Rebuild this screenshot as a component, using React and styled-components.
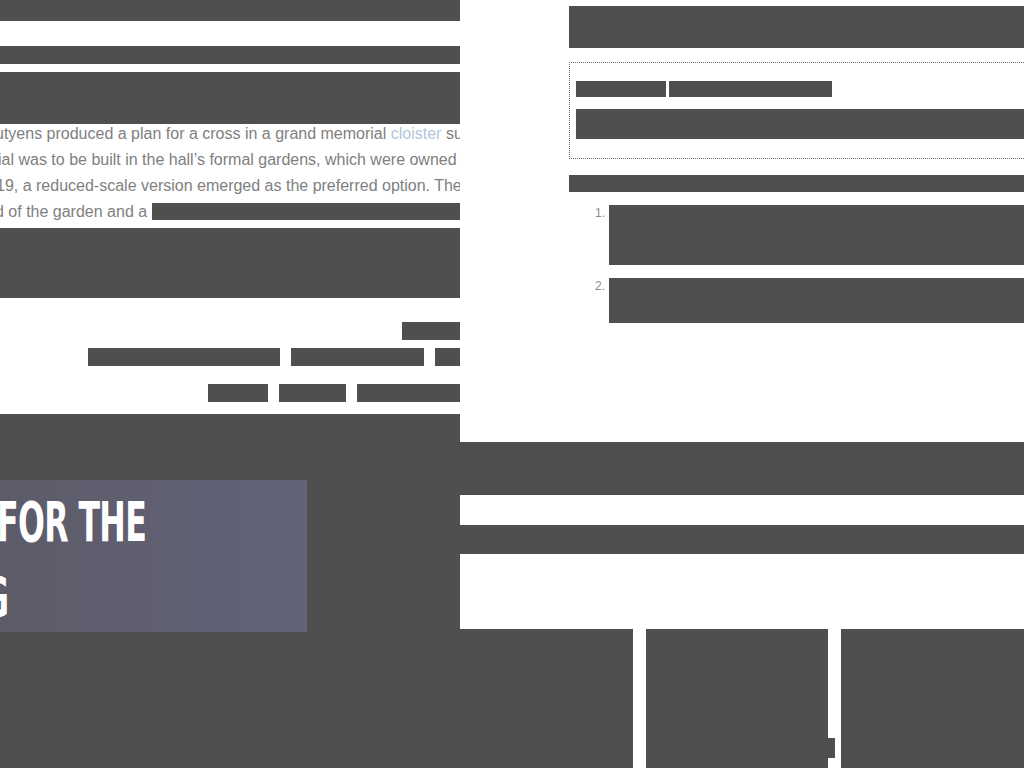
import styled, { createGlobalStyle } from 'styled-components';

const GlobalStyle = createGlobalStyle`
  html, body {
    margin: 0;
    padding: 0;
    background: #ffffff;
    overflow: hidden;
  }
  body {
    font-family: 'Liberation Sans', Arial, sans-serif;
  }
`;

const DARK = '#4f4f4f';

export default function App() {
  return (
    <>
      <GlobalStyle />
      <Page>
        <LeftColumn>
          <Bar h={21} />
          <Bar h={18} top={25} />
          <Bar h={52} top={8} />

          <Article>
            <Line offset={-5}>utyens produced a plan for a cross in a grand memorial <Link>cloister</Link> surrounding</Line>
            <Line offset={-2}>ial was to be built in the hall’s formal gardens, which were owned by</Line>
            <Line offset={-4}>19, a reduced-scale version emerged as the preferred option. The</Line>
            <Line offset={-5}>d of the garden and a <Hidden>xxxxxxxxxxxxxxxxxxxxxxxxxxxxxxxxxxxxxxxxxxxxxxxxxxxxx</Hidden></Line>
          </Article>

          <Bar h={70} top={3} />

          <Credits>
            <ChunkRow>
              <Chunk w={58} />
            </ChunkRow>
            <ChunkRow top={8}>
              <Chunk w={192} />
              <Chunk w={133} />
              <Chunk w={25} />
            </ChunkRow>
            <ChunkRow top={18}>
              <Chunk w={60} />
              <Chunk w={67} />
              <Chunk w={103} />
            </ChunkRow>
          </Credits>

          <Hero>
            <Banner>
              <BannerLine>
                <BannerText offset={-3}>FOR THE</BannerText>
              </BannerLine>
              <BannerLine>
                <BannerText offset={-17}>G</BannerText>
              </BannerLine>
            </Banner>
          </Hero>
        </LeftColumn>

        <RightColumn>
          <Sidebar>
            <Bar h={42} top={6} />
            <Notice>
              <ChunkRow align="flex-start" gapSize={3}>
                <Chunk w={90} h={16} />
                <Chunk w={163} h={16} />
              </ChunkRow>
              <Bar h={30} top={12} />
            </Notice>
            <Bar h={17} top={16} />
            <Steps>
              <Step>
                <StepNumber>1.</StepNumber>
                <StepBody h={60} />
              </Step>
              <Step>
                <StepNumber>2.</StepNumber>
                <StepBody h={45} />
              </Step>
            </Steps>
          </Sidebar>

          <Band h={53} />
          <Band h={29} top={30} />

          <Tiles>
            <Tile w={173} />
            <Tile w={182}>
              <TileBadge />
            </Tile>
            <Tile w={200} />
          </Tiles>
        </RightColumn>
      </Page>
    </>
  );
}

const Page = styled.div`
  display: flex;
  width: 1024px;
  height: 768px;
  overflow: hidden;
`;

const LeftColumn = styled.div`
  flex: none;
  width: 460px;
  display: flex;
  flex-direction: column;
  overflow: hidden;
`;

const Bar = styled.div`
  flex: none;
  height: ${p => p.h}px;
  margin-top: ${p => p.top || 0}px;
  background: ${DARK};
`;

const Article = styled.div`
  margin-top: -3px;
  font-size: 16px;
  line-height: 26px;
  color: #808080;
  overflow: hidden;
`;

const Line = styled.div`
  white-space: nowrap;
  height: 26px;
  margin-left: ${p => p.offset || 0}px;
`;

const Link = styled.span`
  color: #b3c5dc;
`;

const Hidden = styled.span`
  background: ${DARK};
  color: ${DARK};
`;

const Credits = styled.div`
  height: 116px;
  padding-top: 24px;
  box-sizing: border-box;
`;

const ChunkRow = styled.div`
  display: flex;
  justify-content: ${p => p.align || 'flex-end'};
  gap: ${p => p.gapSize || 11}px;
  margin-top: ${p => p.top || 0}px;
`;

const Chunk = styled.div`
  flex: none;
  width: ${p => p.w}px;
  height: ${p => p.h || 18}px;
  background: ${DARK};
`;

const Hero = styled.div`
  flex: 1;
  background: ${DARK};
  padding-top: 66px;
`;

const Banner = styled.div`
  width: 307px;
  height: 152px;
  background: linear-gradient(90deg, #5c5c68 0%, #62627a 100%);
  padding-top: 15px;
  box-sizing: border-box;
  overflow: hidden;
`;

const BannerLine = styled.div`
  height: 75px;
  white-space: nowrap;
`;

const BannerText = styled.span`
  display: inline-block;
  margin-left: ${p => p.offset}px;
  font-family: 'DejaVu Sans Condensed', 'DejaVu Sans', sans-serif;
  font-weight: 700;
  font-size: 55px;
  line-height: 55px;
  letter-spacing: -1px;
  color: #ffffff;
  transform: scaleX(0.64);
  transform-origin: left center;
`;

const RightColumn = styled.div`
  flex: none;
  width: 564px;
  display: flex;
  flex-direction: column;
  overflow: hidden;
  background: #ffffff;
`;

const Sidebar = styled.div`
  flex: none;
  height: 442px;
  width: 620px;
  padding-left: 109px;
  box-sizing: border-box;
`;

const Notice = styled.div`
  margin-top: 14px;
  height: 97px;
  box-sizing: border-box;
  border: 1px dotted #6a6a6a;
  border-right: none;
  padding: 18px 0 0 6px;
`;

const Steps = styled.ol`
  list-style: none;
  margin: 13px 0 0;
  padding: 0;
  display: flex;
  flex-direction: column;
  gap: 13px;
`;

const Step = styled.li`
  display: flex;
  align-items: flex-start;
`;

const StepNumber = styled.span`
  width: 40px;
  text-align: right;
  padding-right: 4px;
  box-sizing: border-box;
  padding-top: 1px;
  font-size: 12px;
  line-height: 14px;
  color: #8a8a8a;
`;

const StepBody = styled.div`
  flex: 1;
  height: ${p => p.h}px;
  background: ${DARK};
`;

const Band = styled.div`
  flex: none;
  height: ${p => p.h}px;
  margin-top: ${p => p.top || 0}px;
  background: ${DARK};
`;

const Tiles = styled.div`
  flex: 1;
  margin-top: 75px;
  display: flex;
  gap: 13px;
`;

const Tile = styled.div`
  position: relative;
  flex: none;
  width: ${p => p.w}px;
  background: ${DARK};
`;

const TileBadge = styled.div`
  position: absolute;
  right: -7px;
  top: 109px;
  width: 12px;
  height: 20px;
  background: ${DARK};
`;
